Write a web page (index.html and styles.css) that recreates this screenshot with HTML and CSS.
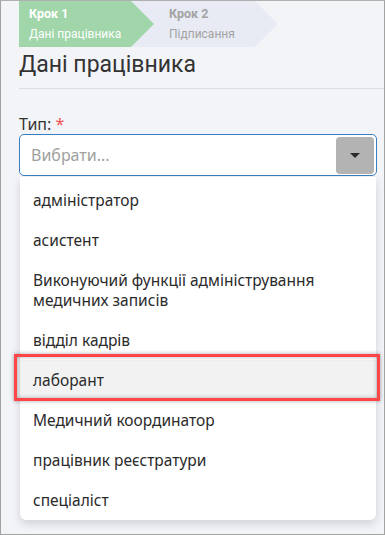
FILE: index.html
```html
<!DOCTYPE html>
<html lang="uk">
<head>
    <meta charset="UTF-8">
    <meta name="viewport" content="width=device-width, initial-scale=1.0">
    <title>Дані працівника</title>
    <link rel="stylesheet" href="styles.css">
</head>
<body>
    <div class="frame">
        <div class="steps">
            <div class="step step-done">
                <div class="step-title">Крок 1</div>
                <div class="step-name">Дані працівника</div>
            </div>
            <div class="step step-next">
                <div class="step-title">Крок 2</div>
                <div class="step-name">Підписання</div>
            </div>
        </div>

        <h1>Дані працівника</h1>
        <div class="rule"></div>

        <label class="field-label">Тип: <span class="req">*</span></label>
        <div class="select">
            <span class="placeholder">Вибрати...</span>
            <span class="select-btn"><span class="caret"></span></span>
        </div>

        <ul class="options">
            <li>адміністратор</li>
            <li>асистент</li>
            <li>Виконуючий функції адміністрування медичних записів</li>
            <li>відділ кадрів</li>
            <li class="hover marked">лаборант</li>
            <li>Медичний координатор</li>
            <li>працівник реєстратури</li>
            <li>спеціаліст</li>
        </ul>
    </div>
</body>
</html>
```

FILE: styles.css
```css
html, body {
    margin: 0;
    padding: 0;
}
body {
    font-family: 'Noto Sans', 'Open Sans', sans-serif;
    color: #333;
    background: #fff;
}
.frame {
    box-sizing: border-box;
    width: 385px;
    height: 535px;
    border: 1px solid #a3a3a3;
    border-top-color: #b0b0b0;
    background: #f3f4f8;
    padding: 0 7px 0 18px;
    overflow: hidden;
}

/* stepper */
.steps {
    display: flex;
    font-family: 'Roboto', sans-serif;
    font-size: 12px;
    line-height: 20px;
}
.step {
    box-sizing: border-box;
    height: 46px;
    padding: 3px 0;
}
.step-title {
    font-weight: bold;
    font-size: 12.5px;
}
.step-done {
    position: relative;
    z-index: 1;
    width: 135px;
    padding-left: 10px;
    background: #a0d6a9;
    color: #fff;
    clip-path: polygon(0 0, 112px 0, 135px 50%, 112px 100%, 0 100%);
}
.step-next {
    width: 147px;
    margin-left: -23px;
    padding-left: 38px;
    background: #e8ebf3;
    color: #a3a3a3;
    clip-path: polygon(0 0, 124px 0, 147px 50%, 124px 100%, 0 100%);
}

h1 {
    font-family: 'Roboto', sans-serif;
    font-weight: normal;
    font-size: 23px;
    line-height: 30px;
    margin: 3px 0 8px;
    color: #333;
}
.rule {
    height: 1px;
    background: #dcdde1;
    margin-right: -7px;
}

.field-label {
    display: block;
    margin-top: 25px;
    font-size: 16px;
    line-height: 20px;
    color: #333;
}
.req {
    color: #f0524f;
}

.select {
    box-sizing: border-box;
    display: flex;
    align-items: center;
    justify-content: space-between;
    width: 358px;
    height: 42px;
    padding: 0 2px 0 11px;
    background: #fff;
    border: 1px solid #3a7ec2;
    border-radius: 5px;
}
.placeholder {
    font-size: 16px;
    color: #a0a0a0;
}
.select-btn {
    display: flex;
    align-items: center;
    justify-content: center;
    width: 38px;
    height: 37px;
    margin-top: 1px;
    background: #b3b3b3;
    border-radius: 4px;
}
.caret {
    width: 0;
    height: 0;
    border-left: 5px solid transparent;
    border-right: 5px solid transparent;
    border-top: 5px solid #2a2a2a;
}

/* dropdown options */
.options {
    list-style: none;
    width: 356px;
    margin: 1px 0 0 1px;
    padding: 3px 0 0;
    background: #fff;
    border-radius: 0 0 6px 6px;
    box-shadow: 0 4px 10px rgba(0, 0, 0, 0.14);
}
.options li {
    position: relative;
    padding: 10px 13px;
    font-size: 15.5px;
    line-height: 20px;
    color: #2b2b2b;
}
.options li.hover {
    background: #f2f2f2;
}
.options li.marked::after {
    content: "";
    position: absolute;
    top: -6px;
    left: -6px;
    right: -4px;
    bottom: -1px;
    border: 3px solid #ff4647;
    box-shadow: 0 0 4px rgba(0, 0, 0, 0.35), inset 0 0 4px rgba(0, 0, 0, 0.3);
}
```
